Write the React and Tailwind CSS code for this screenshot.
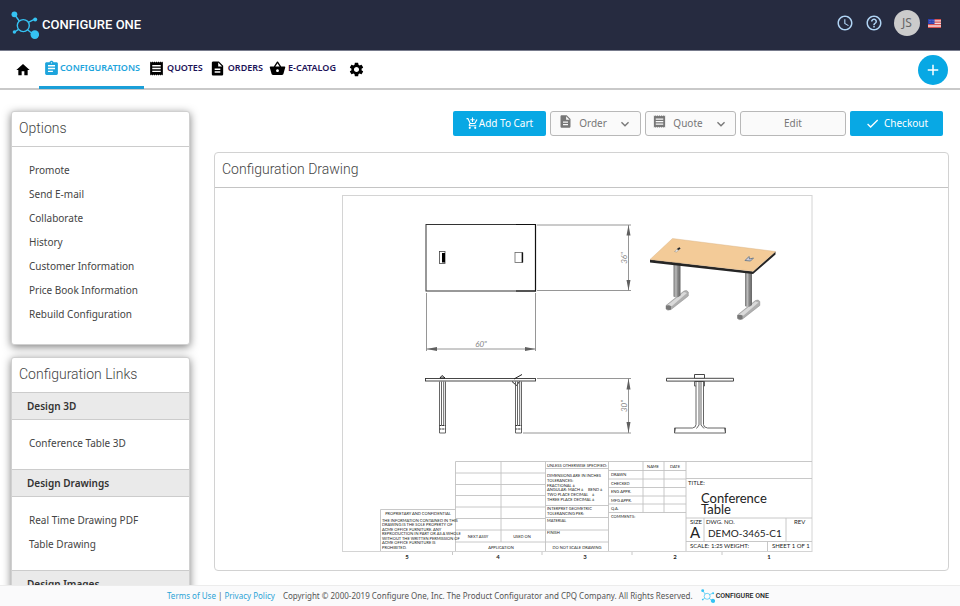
import React from "react";
import {
  MdAccessTime,
  MdAdd,
  MdAddShoppingCart,
  MdAssignment,
  MdCheck,
  MdDescription,
  MdExpandMore,
  MdHelpOutline,
  MdHome,
  MdReceipt,
  MdSettings,
  MdShoppingBasket,
} from "react-icons/md";

const optionLinks = [
  "Promote",
  "Send E-mail",
  "Collaborate",
  "History",
  "Customer Information",
  "Price Book Information",
  "Rebuild Configuration",
];

const linkGroups = [
  { title: "Design 3D", links: ["Conference Table 3D"] },
  { title: "Design Drawings", links: ["Real Time Drawing PDF", "Table Drawing"] },
  { title: "Design Images", links: [] },
];

function Molecule({ className }) {
  return (
    <svg viewBox="0 0 28 28" className={className} aria-hidden="true">
      <g fill="none" stroke="#35c3f3" strokeWidth="1.4">
        <circle cx="12.3" cy="14.6" r="6" />
        <path d="M3.5 3.5 8.3 10M17.3 11.3l6-3M7.5 18.3 3.6 21M16.5 18.8l5 4" />
      </g>
      <g fill="#35c3f3">
        <circle cx="3.4" cy="3.3" r="2.9" />
        <circle cx="24.2" cy="8.6" r="2" />
        <circle cx="3.4" cy="21" r="1.7" />
        <circle cx="23.8" cy="23.6" r="4.3" />
      </g>
    </svg>
  );
}

function Flag() {
  return (
    <svg viewBox="0 0 13 9" className="h-[9px] w-[13px]" aria-hidden="true">
      <rect width="13" height="9" fill="#f3dadd" />
      <path d="M0 .6h13M0 3.1h13M0 5.7h13M0 8.3h13" stroke="#d9534f" strokeWidth="1.3" />
      <rect width="6.5" height="5" fill="#2b3fae" />
      <path d="M1 1.5h5M1 3.3h5" stroke="#8793dd" strokeWidth=".6" strokeDasharray=".7 .7" />
    </svg>
  );
}

function Tab({ icon: Icon, label }) {
  return (
    <a href="#" className="flex h-full items-center gap-0.5 pb-[3px] text-[9px] font-semibold text-[#1c1257]">
      <Icon className="size-[17px] text-black" />
      {label}
    </a>
  );
}

function T({ x, y, size = 4, anchor = "start", children, weight }) {
  return (
    <text x={x} y={y} fontSize={size} textAnchor={anchor} fontWeight={weight}>
      {children}
    </text>
  );
}

function TableDrawing() {
  return (
    <svg viewBox="342 195 471 368" className="w-full max-w-[471px]" role="img" aria-label="Conference table drawing">
      <rect x="342.5" y="195.5" width="469.5" height="356" fill="#fff" stroke="#d4d4d4" />

      {/* top view */}
      <rect x="426" y="224.5" width="109.5" height="66.5" fill="none" stroke="#333" />
      <path d="M516 224.5h19.5V291H516" fill="none" stroke="#111" strokeWidth="1.2" />
      <rect x="439.5" y="251.5" width="5.5" height="12" fill="#fff" stroke="#444" strokeWidth=".8" />
      <rect x="442" y="253" width="3" height="9.5" fill="#000" />
      <rect x="515" y="252.5" width="7.5" height="10" fill="#fff" stroke="#666" strokeWidth=".8" />
      <path d="M522.4 252.5v10" stroke="#111" strokeWidth="1.5" />
      <g stroke="#8a8a8a" strokeWidth=".9" fill="none">
        <path d="M537 225h94M537 290.5h94M628.5 225v65.5" />
        <path d="M426.5 293v58M535.5 293v58M426.5 349h109" />
        <path d="M537 378.5h94M523 433h108M628.5 378.5V433" />
      </g>
      <path
        d="m628.5 225-2 10.5h4zM628.5 290.5l-2-10.5h4zM426.5 349l10.5-2v4zM535.5 349l-10.5-2v4zM628.5 378.5l-2 11h4zM628.5 433l-2-11h4z"
        fill="#606060"
      />

      {/* front view */}
      <rect x="425.5" y="378.5" width="110" height="2.5" fill="#fff" stroke="#333" strokeWidth=".9" />
      <path d="m440 378 2-2.5 3 2.5zM514 379l8-4.5M512 381.5l4.5 4 3-4" fill="none" stroke="#222" strokeWidth="1" />
      {[439.5, 515.5].map((x) => (
        <g key={x} fill="none" stroke="#555" strokeWidth=".9">
          <path d={`M${x} 381.5v51.5h6v-51.5M${x + 2} 381.5v44M${x + 4.2} 381.5v44`} />
          <path d={`M${x} 425.5h6M${x} 429h6`} stroke="#333" strokeWidth="1.2" strokeDasharray="2 .6" />
        </g>
      ))}

      {/* side view */}
      <g fill="#fff" stroke="#555" strokeWidth=".9">
        <path d="M694.5 381.5h10V386h-10z" />
        <path d="M696 381.5v43q0 3-3.5 3.5h-18v5h51v-5h-18q-4-.5-4-3.5v-43z" />
        <path d="M699 381.5v43.5l-2.5 3.5M701 381.5v43.5l3 3.5M674.5 433l1-5M725.5 433l-1-5" fill="none" />
        <path d="M694.5 374.5h10v4h-10z" stroke="#333" />
        <path d="M666.5 378.3h67v2.8h-67z" stroke="#333" />
      </g>

      {/* isometric view */}
      <defs>
        <linearGradient id="steel">
          <stop stopColor="#777" />
          <stop offset=".35" stopColor="#bbb" />
          <stop offset=".6" stopColor="#888" />
          <stop offset="1" stopColor="#666" />
        </linearGradient>
      </defs>
      {[[0, 0], [71.5, 9.5]].map(([dx, dy]) => (
        <g key={dx} transform={`translate(${dx} ${dy})`}>
          <path d="M666 305.5 684 291q3-1.5 4.3 1v4L671 309.5q-4 1.5-5-.5z" fill="#b0b0b0" stroke="#888" strokeWidth=".5" />
          <path d="m667 305.5 17-13.5 3 1-15 13z" fill="#dadada" />
          <path d="M666 305.8q3-1.5 5 .5v3.3q-3 1-5-.8z" fill="#777" />
          <path d="M673.5 262h7v33.5q-3.5 3.5-7 1z" fill="url(#steel)" />
        </g>
      ))}
      <path d="m650 259.5 103 12 22.5-20v3L753 274l-103-11.5z" fill="#252525" />
      <path d="m672.5 238.5 103 13-22.5 19.7L650 259.5z" fill="#f3cb98" stroke="#d7b183" strokeWidth=".4" />
      <path d="m674.5 251.5 4-3.5 2 .5-4 3.5z" fill="#eee" stroke="#777" strokeWidth=".4" />
      <path d="m677.5 249.5 2.5-1.5" stroke="#222" strokeWidth="1.5" />
      <path d="m745 260.5 4-4 .5 2.5 4-1-3 3z" fill="#ccd" stroke="#678" strokeWidth=".9" />

      {/* title block rules */}
      <g fill="none" stroke="#c2c2c2" strokeWidth=".9">
        <path d="M380.5 551V509.5H455M455.5 551v-89.5H812M501 461.5V542M455.5 473h90M455.5 484.5h90M455.5 495.5h90M455.5 507h90M455.5 518.5h90M455.5 530h90M455.5 542H609" />
        <path d="M545.5 461.5V551M545.5 468.5H608.5M545.5 505.5H608.5M545.5 517.5H608.5M545.5 530H608.5M608.5 461.5V551" />
        <path d="M608.5 470.5H686M608.5 479H686M608.5 487.5H686M608.5 496H686M608.5 504H686M608.5 512.5H686M643 461.5v51M664 461.5v51M686 461.5V551" />
        <path d="M686 478.5h126M686 518h126M686 541.5h126M704 518v23.5M786 518v23.5M767.5 541.5v9.5M452.5 552v3M542 552v3M632 552v3M722 552v3" />
      </g>

      <g fill="#888" fontFamily="Lato, sans-serif" fontStyle="italic">
        <T x={481} y={347} size={8} anchor="middle">60"</T>
        <g transform="translate(627 258) rotate(-90)"><T x={0} y={0} size={8} anchor="middle">36"</T></g>
        <g transform="translate(627 406) rotate(-90)"><T x={0} y={0} size={8} anchor="middle">30"</T></g>
      </g>

      <g fill="#222" fontFamily="Lato, sans-serif">
        <T x={418} y={515} anchor="middle">PROPRIETARY AND CONFIDENTIAL</T>
        <T x={382} y={522}>THE INFORMATION CONTAINED IN THIS</T>
        <T x={382} y={526}>DRAWING IS THE SOLE PROPERTY OF</T>
        <T x={382} y={531}>ACME OFFICE FURNITURE. ANY</T>
        <T x={382} y={535}>REPRODUCTION IN PART OR AS A WHOLE</T>
        <T x={382} y={540}>WITHOUT THE WRITTEN PERMISSION OF</T>
        <T x={382} y={544}>ACME OFFICE FURNITURE IS</T>
        <T x={382} y={549}>PROHIBITED.</T>
        <T x={478} y={538} anchor="middle">NEXT ASSY</T>
        <T x={522} y={538} anchor="middle">USED ON</T>
        <T x={501} y={549} anchor="middle">APPLICATION</T>
        <T x={577} y={467} anchor="middle">UNLESS OTHERWISE SPECIFIED:</T>
        <T x={547} y={477}>DIMENSIONS ARE IN INCHES</T>
        <T x={547} y={482}>TOLERANCES:</T>
        <T x={547} y={487}>FRACTIONAL ±</T>
        <T x={547} y={491}>ANGULAR: MACH ±</T>
        <T x={588} y={491}>BEND ±</T>
        <T x={547} y={496}>TWO PLACE DECIMAL</T>
        <T x={592} y={496}>±</T>
        <T x={547} y={501}>THREE PLACE DECIMAL</T>
        <T x={592} y={501}>±</T>
        <T x={547} y={510}>INTERPRET GEOMETRIC</T>
        <T x={547} y={515}>TOLERANCING PER:</T>
        <T x={547} y={522}>MATERIAL</T>
        <T x={547} y={534}>FINISH</T>
        <T x={577} y={549} anchor="middle">DO NOT SCALE DRAWING</T>
        <T x={653} y={468} anchor="middle">NAME</T>
        <T x={675} y={468} anchor="middle">DATE</T>
        <T x={611} y={476}>DRAWN</T>
        <T x={611} y={485}>CHECKED</T>
        <T x={611} y={493}>ENG APPR.</T>
        <T x={611} y={502}>MFG APPR.</T>
        <T x={611} y={510}>Q.A.</T>
        <T x={611} y={518}>COMMENTS:</T>
        <T x={688} y={485} size={6}>TITLE:</T>
        <T x={701} y={503} size={13}>Conference</T>
        <T x={701} y={514} size={13}>Table</T>
        <T x={690} y={524} size={6}>SIZE</T>
        <T x={706} y={524} size={6}>DWG.  NO.</T>
        <T x={794} y={524} size={6}>REV</T>
        <T x={690} y={538} size={15}>A</T>
        <T x={708} y={537} size={10}>DEMO-3465-C1</T>
        <T x={690} y={548} size={6}>SCALE: 1:25</T>
        <T x={724} y={548} size={6}>WEIGHT:</T>
        <T x={772} y={548} size={6}>SHEET 1 OF 1</T>
        <g fontWeight="700">
          <T x={407} y={559} size={6} anchor="middle">5</T>
          <T x={498} y={559} size={6} anchor="middle">4</T>
          <T x={585} y={559} size={6} anchor="middle">3</T>
          <T x={675} y={559} size={6} anchor="middle">2</T>
          <T x={769} y={559} size={6} anchor="middle">1</T>
        </g>
      </g>
    </svg>
  );
}

function LinkList({ links }) {
  return (
    <ul className="px-[17px] pt-[11px] text-[10px] leading-6">
      {links.map((link) => (
        <li key={link}>
          <a href="#">{link}</a>
        </li>
      ))}
    </ul>
  );
}

const card = "rounded-[3px] border border-[#d0d0d0] bg-white shadow-[0_2px_8px_rgba(0,0,0,0.5)]";
const cardTitle = "px-[7px] pb-0.5 font-['Roboto',sans-serif] text-sm leading-8 font-light text-[#444]";
const primary = "flex h-[25px] w-[93px] items-center justify-center rounded-[2px] bg-[#08a8e4] pb-px text-[10px] text-white";
const secondary = "flex h-[25px] items-center justify-center rounded-[3px] border border-[#b8b8b8] bg-[#fafafa] text-[10px] text-[#777]";

export default function App() {
  return (
    <div className="flex h-screen flex-col overflow-hidden bg-white font-['Noto_Sans',sans-serif] text-[#444]">
      <header className="flex h-[51px] shrink-0 items-center justify-between border-b border-[#777b8c] bg-[#262b40] pr-[19px] pl-[11px]">
        <div className="flex items-center gap-[3px] font-['Roboto',sans-serif] text-[13px] font-medium text-white">
          <Molecule className="size-7" />
          CONFIGURE ONE
        </div>
        <div className="flex items-center pb-1 text-[#b0d4f4]">
          <button type="button" aria-label="Recent" className="mr-[11px]">
            <MdAccessTime className="size-[18px]" />
          </button>
          <button type="button" aria-label="Help" className="mr-[11px]">
            <MdHelpOutline className="size-[18px]" />
          </button>
          <button type="button" className="mr-2 size-[26px] rounded-full bg-[#cbcbcb] text-xs text-[#666]">
            JS
          </button>
          <button type="button" aria-label="Language">
            <Flag />
          </button>
        </div>
      </header>

      <nav className="flex h-[39px] shrink-0 items-center border-b-2 border-[#c9c9c9] pr-3 pl-[15px]">
        <a href="#" aria-label="Home" className="mr-2">
          <MdHome className="size-4 text-black" />
        </a>
        <a
          href="#"
          className="mr-1 -mb-px flex h-[38px] items-center border-b-[3px] border-[#1b9fd8] pr-1 pb-px pl-1 text-[9px] font-semibold text-[#1da4dc]"
        >
          <MdAssignment className="size-[17px]" />
          CONFIGURATIONS
        </a>
        <div className="flex h-full items-center gap-1.5">
          <Tab icon={MdReceipt} label="QUOTES" />
          <Tab icon={MdDescription} label="ORDERS" />
          <Tab icon={MdShoppingBasket} label="E-CATALOG" />
        </div>
        <a href="#" aria-label="Settings" className="ml-3">
          <MdSettings className="size-[17px] text-black" />
        </a>
        <button
          type="button"
          aria-label="Add"
          className="ml-auto flex size-[30px] items-center justify-center rounded-full bg-[#08a8e4] text-white"
        >
          <MdAdd className="size-[18px]" />
        </button>
      </nav>

      <div className="flex min-h-0 flex-1 overflow-hidden pt-[21px] pr-[11px] pl-[11px]">
        <aside className="flex w-[179px] shrink-0 flex-col gap-3">
          <section className={card}>
            <h2 className={`${cardTitle} border-b border-[#ccc]`}>Options</h2>
            <div className="pb-[18px]">
              <LinkList links={optionLinks} />
            </div>
          </section>
          <section className={card}>
            <h2 className={cardTitle}>Configuration Links</h2>
            {linkGroups.map((group) => (
              <div key={group.title} className="pb-3.5">
                <h3 className="border-y border-[#ccc] bg-[#eaeaea] px-[15px] text-[10px] leading-[26px] font-semibold text-[#333]">
                  {group.title}
                </h3>
                <LinkList links={group.links} />
              </div>
            ))}
          </section>
        </aside>

        <main className="ml-6 min-w-0 flex-1">
          <div className="mr-[6px] flex justify-end gap-1">
            <button type="button" className={primary}>
              <MdAddShoppingCart className="size-[13px]" />
              Add To Cart
            </button>
            <button type="button" className={`${secondary} w-[91px]`}>
              <MdDescription className="mr-[6px] mb-1 size-[15px]" />
              Order
              <MdExpandMore className="ml-2.5 size-4" />
            </button>
            <button type="button" className={`${secondary} w-[91px]`}>
              <MdReceipt className="mr-[6px] mb-1 size-[15px]" />
              Quote
              <MdExpandMore className="ml-2.5 size-4" />
            </button>
            <button type="button" className={`${secondary} w-[106px]`}>
              Edit
            </button>
            <button type="button" className={primary}>
              <MdCheck className="mr-1 size-[15px]" />
              Checkout
            </button>
          </div>

          <section className="mt-4 rounded-[4px] border border-[#d2d2d2]">
            <h1 className={`${cardTitle} border-b border-[#c4c4c4]`}>Configuration Drawing</h1>
            <div className="flex justify-center pt-[7px] pr-[9px] pb-[7px]">
              <TableDrawing />
            </div>
          </section>
        </main>
      </div>

      <footer className="flex h-[21px] shrink-0 items-center justify-center border-t border-[#ececec] bg-[#fafafb] pr-6 text-[8px] text-[#555]">
        <a href="#" className="text-[#2ba3d6]">Terms of Use</a>
        <span className="mx-0.5">|</span>
        <a href="#" className="text-[#2ba3d6]">Privacy Policy</a>
        <p className="ml-2">
          Copyright © 2000-2019 Configure One, Inc. The Product Configurator and CPQ Company. All Rights Reserved.
        </p>
        <div className="ml-2 flex items-center gap-px font-['Roboto',sans-serif] text-[7px] font-medium text-[#222]">
          <Molecule className="size-[14px]" />
          CONFIGURE ONE
        </div>
      </footer>
    </div>
  );
}
